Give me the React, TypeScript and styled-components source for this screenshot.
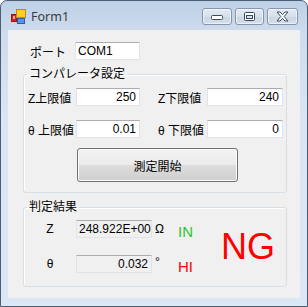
import React from "react";
import styled, { createGlobalStyle } from "styled-components";

const GlobalStyle = createGlobalStyle`
  html, body {
    margin: 0;
    padding: 0;
    background: #ffffff;
  }
  body {
    font-family: "Liberation Sans", "Noto Sans CJK JP", sans-serif;
    font-size: 12px;
    color: #000;
  }
`;

const UI_FONT = `"Liberation Sans", "Noto Sans CJK JP", sans-serif`;
const NUM_FONT = `"Liberation Sans Narrow", "Liberation Sans", sans-serif`;

const Window = styled.div`
  width: 308px;
  height: 307px;
  box-sizing: border-box;
  border: 1px solid #4d5d72;
  border-radius: 7px 7px 0 0;
  background: linear-gradient(#bdd0e6 0, #cddced 30px, #d9e5f3 120px, #dbe7f4);
  display: flex;
  flex-direction: column;
  overflow: hidden;
`;

const TitleBar = styled.div`
  height: 29px;
  display: flex;
  align-items: center;
  padding: 0 9px 0 10px;
  box-sizing: border-box;
`;

const AppIcon = styled.svg`
  width: 16px;
  height: 16px;
  flex: none;
  margin-top: 2px;
`;

const Title = styled.span`
  font-family: "Noto Sans", "Liberation Sans", sans-serif;
  font-size: 12.5px;
  color: #3a3a3a;
  margin-left: 4px;
  margin-top: 2px;
  flex: 1;
`;

const CaptionButtons = styled.div`
  display: flex;
  gap: 3px;
  margin-top: 2px;
`;

const CaptionButton = styled.div<{ $w: number }>`
  width: ${(p) => p.$w}px;
  height: 17px;
  box-sizing: border-box;
  border: 1px solid #8796ab;
  border-radius: 3px;
  background: linear-gradient(#e3ebf4, #d5e0ec 50%, #c9d6e5 51%, #d4dfec);
  box-shadow: inset 0 0 0 1px rgba(255, 255, 255, 0.55);
  display: flex;
  align-items: center;
  justify-content: center;
`;

const Client = styled.div`
  flex: 1;
  margin: 0 7px 8px;
  background: #f0f0f0;
  display: flex;
  flex-direction: column;
  padding-top: 12px;
  box-sizing: border-box;
`;

const PortRow = styled.div`
  display: flex;
  align-items: center;
  padding-left: 22px;
  height: 18px;
`;

const Label = styled.span`
  font-family: ${UI_FONT};
  font-size: 12px;
  white-space: nowrap;
`;

const PortLabel = styled(Label)`
  width: 45px;
`;

const TextBox = styled.div<{ $w: number; $align?: string; $readOnly?: boolean }>`
  width: ${(p) => p.$w}px;
  height: 18px;
  box-sizing: border-box;
  border: 1px solid #e2e3ea;
  border-top-color: #abadb3;
  background: ${(p) => (p.$readOnly ? "#f0f0f0" : "#ffffff")};
  font-family: ${NUM_FONT};
  font-size: 12px;
  line-height: 16px;
  text-align: ${(p) => p.$align ?? "right"};
  padding: 0 3px 0 2px;
  white-space: nowrap;
  overflow: hidden;
`;

const Group = styled.fieldset<{ $h: number }>`
  margin: 7px 0 0 15px;
  width: 264px;
  height: ${(p) => p.$h}px;
  box-sizing: border-box;
  padding: 0;
  border: 1px solid #d5dfe5;
  border-radius: 3px;
  box-shadow: inset 1px 1px 0 #ffffff;
  min-width: 0;
`;

const GroupTitle = styled.legend`
  font-family: ${UI_FONT};
  font-size: 12px;
  line-height: 14px;
  padding: 0 2px;
  margin-left: 3px;
`;

const LimitsGrid = styled.div`
  display: grid;
  grid-template-columns: 48px 64px 18px 49px 76px;
  grid-auto-rows: 18px;
  row-gap: 14px;
  align-items: center;
  padding: 7px 0 0 4px;
`;

const StartButton = styled.button`
  grid-column: 2 / 6;
  justify-self: start;
  align-self: start;
  margin: -4px 0 0 1px;
  width: 161px;
  height: 34px;
  border: 1px solid #707070;
  border-radius: 3px;
  background: linear-gradient(#f2f2f2, #ebebeb 50%, #dddddd 51%, #cfcfcf);
  box-shadow: inset 0 0 0 1px #fbfbfb;
  font-family: ${UI_FONT};
  font-size: 12px;
  color: #000;
  padding: 0;
`;

const ResultGrid = styled.div`
  display: grid;
  grid-template-columns: 52px 76px 24px 42px 1fr;
  grid-template-rows: 18px 18px;
  row-gap: 17px;
  align-items: center;
  padding: 6px 0 0 0;
`;

const ResultLabel = styled(Label)`
  justify-self: center;
`;

const Unit = styled(Label)<{ $top?: boolean }>`
  padding-left: 3px;
  align-self: ${(p) => (p.$top ? "start" : "center")};
  line-height: 14px;
`;

const Status = styled.span<{ $color: string }>`
  font-family: "Liberation Sans", sans-serif;
  font-size: 15px;
  color: ${(p) => p.$color};
  padding: 4px 0 0 2px;
`;

const Verdict = styled.span`
  grid-column: 5;
  grid-row: 1 / 3;
  align-self: center;
  font-family: "Liberation Sans", sans-serif;
  font-size: 36px;
  color: #ff0000;
  padding-left: 3px;
`;

const FormIcon = () => (
  <AppIcon viewBox="0 0 16 16">
    <rect x="0.5" y="5.5" width="5" height="7" fill="#d8231f" stroke="#8a1a12" />
    <rect x="2" y="7" width="2" height="3" fill="#f4a39a" />
    <rect x="5.5" y="0.5" width="9" height="8" fill="#ffd02a" stroke="#c78a0d" />
    <rect x="6.5" y="9.5" width="7" height="5" fill="#5c93e0" stroke="#2c5ea8" />
  </AppIcon>
);

const MinGlyph = () => (
  <svg width="12" height="6" viewBox="0 0 12 6">
    <rect x="0.5" y="1.5" width="11" height="4" rx="1" fill="#ffffff" stroke="#3a4a5e" />
  </svg>
);

const MaxGlyph = () => (
  <svg width="11" height="9" viewBox="0 0 11 9">
    <rect x="0.5" y="0.5" width="10" height="8" rx="1" fill="#ffffff" stroke="#3a4a5e" />
    <rect x="2.5" y="3.5" width="6" height="3" fill="#d7e1ee" stroke="#3a4a5e" />
  </svg>
);

const CloseGlyph = () => (
  <svg width="13" height="11" viewBox="0 0 13 11">
    <path
      d="M1 1 L4 1 L6.5 3.6 L9 1 L12 1 L8.2 5.5 L12 10 L9 10 L6.5 7.4 L4 10 L1 10 L4.8 5.5 Z"
      fill="#ffffff"
      stroke="#3a4a5e"
      strokeLinejoin="round"
    />
  </svg>
);

const App: React.FC = () => {
  return (
    <>
      <GlobalStyle />
      <Window>
        <TitleBar>
          <FormIcon />
          <Title>Form1</Title>
          <CaptionButtons>
            <CaptionButton $w={30}>
              <MinGlyph />
            </CaptionButton>
            <CaptionButton $w={29}>
              <MaxGlyph />
            </CaptionButton>
            <CaptionButton $w={31}>
              <CloseGlyph />
            </CaptionButton>
          </CaptionButtons>
        </TitleBar>

        <Client>
          <PortRow>
            <PortLabel>ポート</PortLabel>
            <TextBox $w={65} $align="left">
              COM1
            </TextBox>
          </PortRow>

          <Group $h={126}>
            <GroupTitle>コンパレータ設定</GroupTitle>
            <LimitsGrid>
              <Label>Z上限値</Label>
              <TextBox $w={64}>250</TextBox>
              <span />
              <Label>Z下限値</Label>
              <TextBox $w={76}>240</TextBox>

              <Label>θ 上限値</Label>
              <TextBox $w={64}>0.01</TextBox>
              <span />
              <Label>θ 下限値</Label>
              <TextBox $w={76}>0</TextBox>

              <StartButton type="button">測定開始</StartButton>
            </LimitsGrid>
          </Group>

          <Group $h={87}>
            <GroupTitle>判定結果</GroupTitle>
            <ResultGrid>
              <ResultLabel>Z</ResultLabel>
              <TextBox $w={76} $readOnly>
                248.922E+00
              </TextBox>
              <Unit>Ω</Unit>
              <Status $color="#2ec52e">IN</Status>
              <Verdict>NG</Verdict>

              <ResultLabel>θ</ResultLabel>
              <TextBox $w={76} $readOnly>
                0.032
              </TextBox>
              <Unit $top>°</Unit>
              <Status $color="#ff0000">HI</Status>
            </ResultGrid>
          </Group>
        </Client>
      </Window>
    </>
  );
};

export default App;
